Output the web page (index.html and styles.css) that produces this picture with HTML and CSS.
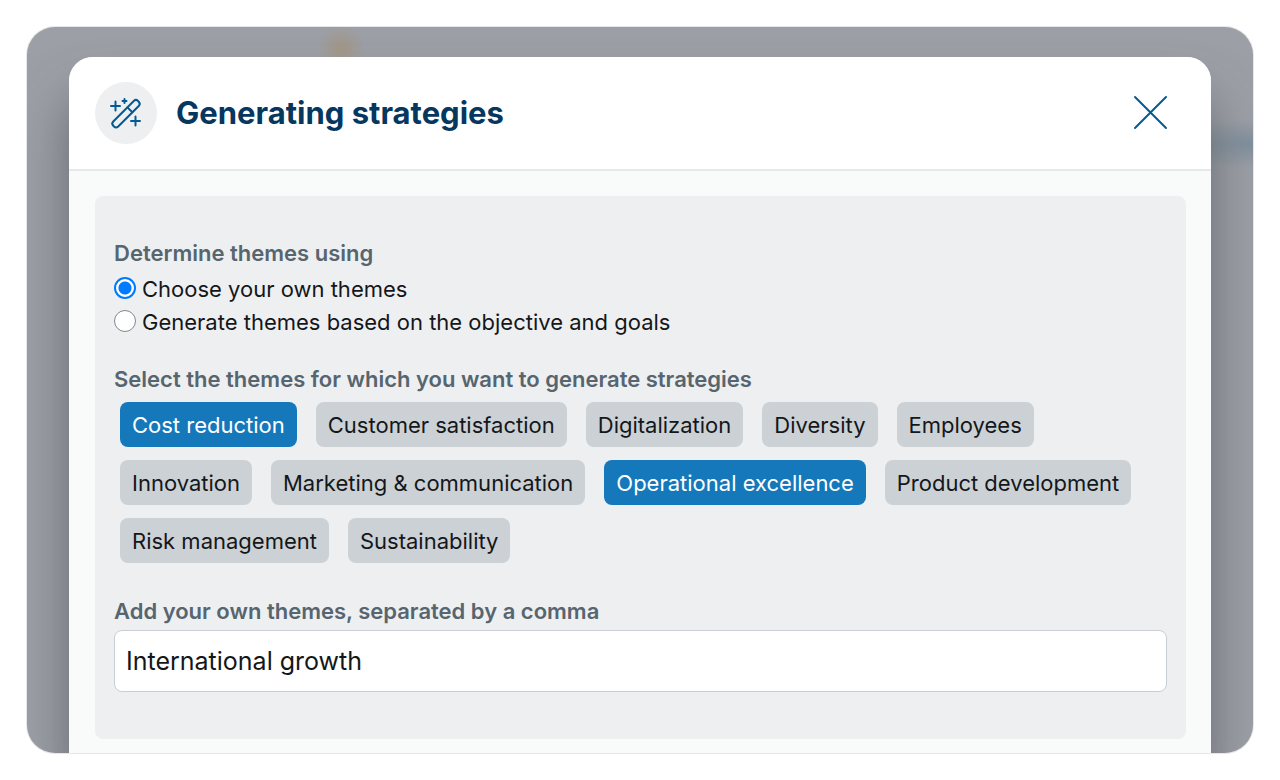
FILE: index.html
```html
<!DOCTYPE html>
<html lang="en">
<head>
	<title>Generating strategies</title>
	<meta charset="utf-8">
	<link rel="stylesheet" href="styles.css">
</head>
<body>
	<main class="stage">
		<section class="modal" role="dialog" aria-labelledby="modal-title">
			<header class="modal-header">
				<span class="badge">
					<svg width="34" height="34" viewBox="0 0 34 34" aria-hidden="true">
						<g transform="rotate(-45 17 17)">
							<rect x="-1" y="14" width="35" height="7" rx="3"/>
							<path d="M22 14v7"/>
						</g>
						<path d="M2 10h9M6.500 5.500v9M13.500 5h4M15.500 3v4M22 25h9M26.500 20.500v9"/>
					</svg>
				</span>
				<h1 id="modal-title">Generating strategies</h1>
				<button type="button" class="close" aria-label="Close">
					<svg width="36" height="36" viewBox="0 0 36 36" aria-hidden="true">
						<path d="M3 2l31 31M34 2L3 33"/>
					</svg>
				</button>
			</header>

			<div class="modal-body">
				<form class="panel">
					<fieldset class="source">
						<legend>Determine themes using</legend>
						<div class="option">
							<input type="radio" name="source" id="src_own" checked>
							<label for="src_own">Choose your own themes</label>
						</div>
						<div class="option">
							<input type="radio" name="source" id="src_generate">
							<label for="src_generate">Generate themes based on the objective and goals</label>
						</div>
					</fieldset>

					<fieldset class="themes">
						<legend>Select the themes for which you want to generate strategies</legend>
						<div class="chips">
							<button type="button" class="chip selected" aria-pressed="true">Cost reduction</button>
							<button type="button" class="chip">Customer satisfaction</button>
							<button type="button" class="chip">Digitalization</button>
							<button type="button" class="chip">Diversity</button>
							<button type="button" class="chip">Employees</button>
							<button type="button" class="chip">Innovation</button>
							<button type="button" class="chip">Marketing &amp; communication</button>
							<button type="button" class="chip selected" aria-pressed="true">Operational excellence</button>
							<button type="button" class="chip">Product development</button>
							<button type="button" class="chip">Risk management</button>
							<button type="button" class="chip">Sustainability</button>
						</div>
					</fieldset>

					<label class="own-label" for="own_themes">Add your own themes, separated by a comma</label>
					<input type="text" class="own-themes" id="own_themes" value="International growth">
				</form>
			</div>
		</section>
	</main>
</body>
</html>
```

FILE: styles.css
```css
* {
	box-sizing: border-box;
}

body {
	margin: 0;
	padding: 27px;
	background-color: white;
}

body, input, button {
	font-family: Inter, sans-serif;
	font-size: 22px;
	color: #14171a;
}

/* dimmed page behind the dialog */
.stage {
	padding: 30px 42px 0;
	border-radius: 28px;
	overflow: hidden;
	box-shadow: 0 0 0 1px #e6e7e8;
	background:
		radial-gradient(ellipse 24px 26px at 314px 22px, #a29686, transparent),
		radial-gradient(ellipse 90px 24px at 100% 117px, #7f909e, transparent),
		#9c9fa6;
}

.modal {
	border-radius: 24px 24px 0 0;
	background-color: #f9fbfb;
	box-shadow: 0 40px 50px rgba(80, 85, 90, 0.7);
}

.modal-header {
	display: flex;
	align-items: center;
	padding: 25px 43px 25px 26px;
	border-bottom: 2px solid #e6e8e9;
	border-radius: 24px 24px 0 0;
	background-color: white;
}

.modal-header h1 {
	flex: 1;
	margin: 0 0 0 19px;
	font-size: 31px;
	font-weight: 700;
	line-height: 40px;
	color: #05375f;
}

.badge {
	display: flex;
	align-items: center;
	justify-content: center;
	width: 62px;
	height: 62px;
	border-radius: 50%;
	background-color: #eeeff1;
}

.modal-header svg {
	fill: none;
	stroke: #045a92;
	stroke-width: 2;
	stroke-linecap: round;
}

.close {
	display: flex;
	padding: 0;
	border: 0;
	background: none;
	cursor: pointer;
}

.modal-body {
	padding: 25px 25px 14px 26px;
}

.panel {
	padding: 41px 19px 47px;
	border-radius: 8px;
	background-color: #eeeff1;
}

fieldset {
	margin: 0;
	padding: 0;
	border: 0;
}

legend, .own-label {
	display: block;
	padding: 0;
	font-weight: 600;
	line-height: 33px;
	color: #57656e;
}

.option {
	display: flex;
	align-items: flex-start;
	gap: 6px;
	line-height: 33px;
}

.source .option:first-of-type {
	margin-top: 3px;
}

.option input {
	appearance: none;
	width: 22px;
	height: 22px;
	margin: 4px 0 0;
	border: 1px solid #858591;
	border-radius: 50%;
	background-color: white;
}
.option input:checked {
	border: 2px solid #007aff;
	background: radial-gradient(circle, #007aff 6px, white 7px);
}

.themes {
	margin-top: 24px;
}

.chips {
	display: flex;
	flex-wrap: wrap;
	gap: 13px 19px;
	padding: 6px;
}

.chip {
	padding: 7px 12px 5px;
	border: 0;
	border-radius: 8px;
	line-height: 33px;
	background-color: #ccd1d5;
	cursor: pointer;
}
.chip.selected {
	color: white;
	background-color: #1478ba;
}

.own-label {
	margin: 26px 0 2px;
}

.own-themes {
	display: block;
	width: 100%;
	height: 62px;
	padding: 0 11px;
	border: 1px solid #c8ced6;
	border-radius: 8px;
	font-size: 25px;
	background-color: white;
}
```
